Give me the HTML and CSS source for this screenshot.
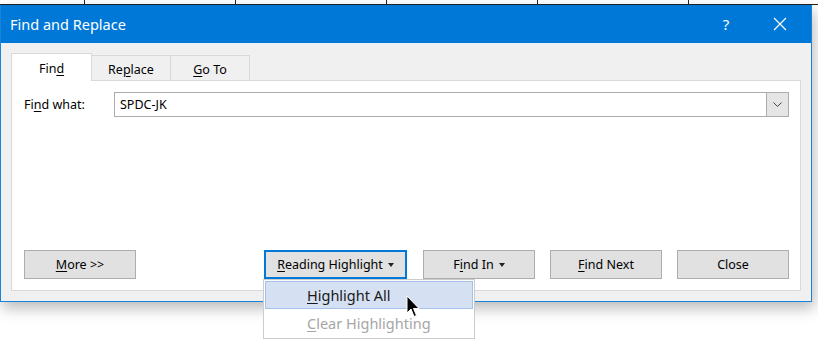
FILE: index.html
```html
<html>
	<head>
	<meta charset="utf-8"/>
		<link rel="stylesheet" href="styles.css">
	</head>
	<body>
		<div class="sheet">
			<div class="cell first"></div>
			<div class="cell"></div>
			<div class="cell"></div>
			<div class="cell"></div>
			<div class="cell"></div>
			<div class="cell last"></div>
		</div>

		<div class="window">
			<div class="titlebar">
				<span class="title">Find and Replace</span>
				<span class="help">?</span>
				<span class="close">
					<svg width="14" height="14" viewBox="0 0 14 14"><path d="M1 1L13 13M13 1L1 13" stroke="#fff" stroke-width="1.2" fill="none"/></svg>
				</span>
			</div>

			<div class="body">
				<div class="tabs">
					<div class="tab active"><span>Fin<u>d</u></span></div>
					<div class="tab"><span>Re<u>p</u>lace</span></div>
					<div class="tab"><span><u>G</u>o To</span></div>
				</div>

				<div class="panel">
					<div class="row">
						<label class="label">Fi<u>n</u>d what:</label>
						<div class="combo">
							<span class="value">SPDC-JK</span>
							<span class="drop">
								<svg width="9" height="5" viewBox="0 0 9 5"><path d="M0.5 0.5L4.5 4.5L8.5 0.5" stroke="#444" stroke-width="1" fill="none"/></svg>
							</span>
						</div>
					</div>

					<div class="buttons">
						<div class="btn"><span><u>M</u>ore &gt;&gt;</span></div>
						<div class="group">
							<div class="menu-wrap">
								<div class="btn focus"><span><u>R</u>eading Highlight</span><span class="tri"></span></div>
								<div class="menu">
									<div class="item hot"><span><u>H</u>ighlight All</span></div>
									<div class="item disabled"><span><u>C</u>lear Highlighting</span></div>
								</div>
							</div>
							<div class="btn"><span>F<u>i</u>nd In</span><span class="tri"></span></div>
							<div class="btn"><span><u>F</u>ind Next</span></div>
							<div class="btn"><span>Close</span></div>
						</div>
					</div>
				</div>
			</div>
		</div>

		<svg class="cursor" width="14" height="23" viewBox="0 0 14 23">
			<path d="M1 1L1 18L5 14L8 21.5L10.5 20.5L7.5 13.5L13 13.5Z" fill="#000" stroke="#fff" stroke-width="1"/>
		</svg>
	</body>
</html>
```

FILE: styles.css
```css
body{
	margin: 0;
	background: #fff;
	font-family: "Noto Sans", "Open Sans", sans-serif;
	position: relative;
	width: 818px;
	height: 352px;
	overflow: hidden;
}
u{ text-underline-offset: 2px; }

.sheet{
	display: flex;
	height: 4px;
	border-bottom: 1px solid #222;
}
.cell{
	width: 150px;
	border-right: 1px solid #222;
	flex: none;
}
.cell.first{ width: 84px; }
.cell.last{ border-right: none; width: 120px; }

.window{
	width: 812px;
	height: 297px;
	box-sizing: border-box;
	border: 1px solid #1883d7;
	border-top: none;
	background: #f0f0f0;
	box-shadow: 2px 6px 14px rgba(0,0,0,.28);
	display: flex;
	flex-direction: column;
}

.titlebar{
	height: 38px;
	background: #0078d7;
	color: #fff;
	display: flex;
	align-items: center;
	padding-left: 9px;
	flex: none;
}
.title{
	font-size: 14.5px;
	flex: 1;
	padding-bottom: 1px;
}
.help{
	font-size: 15px;
	width: 54px;
	text-align: center;
}
.close{
	width: 54px;
	display: flex;
	justify-content: center;
	margin-right: 4px;
}

.body{
	flex: 1;
	padding: 10px;
	display: flex;
	flex-direction: column;
}

.tabs{
	display: flex;
	align-items: flex-end;
	height: 27px;
	font-size: 12.5px;
}
.tab{
	width: 79px;
	height: 25px;
	box-sizing: border-box;
	border: 1px solid #d9d9d9;
	border-bottom: none;
	border-left: none;
	display: flex;
	align-items: center;
	justify-content: center;
	padding-top: 3px;
	color: #000;
}
.tab.active{
	width: 81px;
	height: 28px;
	background: #fff;
	border-left: 1px solid #d9d9d9;
	margin-bottom: -1px;
	position: relative;
	padding-top: 2px;
}

.panel{
	flex: 1;
	background: #fff;
	border: 1px solid #d9d9d9;
	padding: 11px 11px 11px 12px;
	display: flex;
	flex-direction: column;
}

.row{
	display: flex;
	align-items: center;
	font-size: 12.5px;
}
.label{
	width: 90px;
}
.combo{
	flex: 1;
	height: 25px;
	box-sizing: border-box;
	border: 1px solid #acacac;
	display: flex;
	align-items: center;
}
.value{
	flex: 1;
	padding-left: 5px;
}
.drop{
	width: 21px;
	height: 23px;
	background: #e5e5e5;
	border-left: 1px solid #acacac;
	display: flex;
	align-items: center;
	justify-content: center;
}

.buttons{
	margin-top: auto;
	display: flex;
	justify-content: space-between;
	font-size: 12.5px;
}
.group{
	display: flex;
	gap: 15px;
}
.btn{
	width: 112px;
	height: 29px;
	box-sizing: border-box;
	background: #e1e1e1;
	border: 1px solid #adadad;
	display: flex;
	align-items: center;
	justify-content: center;
	gap: 5px;
}
.btn.focus{
	width: 143px;
	border: 2px solid #0078d7;
}
.tri{
	width: 0;
	height: 0;
	border-left: 3.5px solid transparent;
	border-right: 3.5px solid transparent;
	border-top: 4px solid #222;
	margin-top: 1px;
}

.menu-wrap{
	position: relative;
	margin-right: 1px;
}
.menu{
	position: absolute;
	left: -1px;
	top: 29px;
	width: 212px;
	height: 60px;
	box-sizing: border-box;
	background: #fff;
	border: 1px solid #cccccc;
	padding: 1px;
	z-index: 5;
}
.item{
	height: 28px;
	box-sizing: border-box;
	display: flex;
	align-items: center;
	padding-left: 41px;
	font-size: 14.5px;
	color: #1a1a1a;
	border: 1px solid transparent;
}
.item.hot{
	background: #d5e1f2;
	border-color: #a4c1ea;
}
.item.disabled{
	color: #a6a6a6;
}

.cursor{
	position: absolute;
	left: 406px;
	top: 295px;
	z-index: 10;
}
```
